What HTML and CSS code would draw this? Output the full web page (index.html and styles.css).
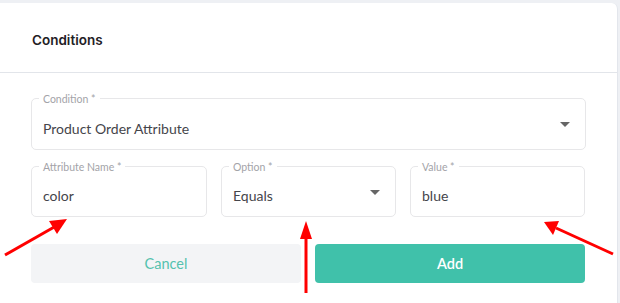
FILE: index.html
```html
<!DOCTYPE html>
<html>
<head>
<meta charset="utf-8">
<link rel="stylesheet" href="styles.css">
</head>
<body>
<div class="card">
  <div class="card-header">Conditions</div>
  <div class="card-body">
    <div class="field field-select field-full">
      <span class="label">Condition *</span>
      <span class="value">Product Order Attribute</span>
      <span class="caret"></span>
    </div>
    <div class="row">
      <div class="field">
        <span class="label">Attribute Name *</span>
        <span class="value">color</span>
      </div>
      <div class="field field-select">
        <span class="label">Option *</span>
        <span class="value">Equals</span>
        <span class="caret"></span>
      </div>
      <div class="field">
        <span class="label">Value *</span>
        <span class="value">blue</span>
      </div>
    </div>
    <div class="actions">
      <button class="btn btn-cancel">Cancel</button>
      <button class="btn btn-add">Add</button>
    </div>
  </div>
</div>
<svg class="arrows" width="620" height="303" viewBox="0 0 620 303">
  <g stroke="#ff0000" stroke-width="3" fill="none" stroke-linecap="butt">
    <line x1="5" y1="255" x2="56" y2="226"/>
    <line x1="306" y1="293" x2="306" y2="235"/>
    <line x1="613" y1="254" x2="556" y2="228"/>
  </g>
  <g fill="#ff0000">
    <polygon points="67,219 49,221 57,234"/>
    <polygon points="306,221 300,239 312,239"/>
    <polygon points="544,222 553,235 559,221"/>
  </g>
</svg>
</body>
</html>
```
FILE: styles.css
```css
html, body {
  margin: 0;
  padding: 0;
}
body {
  width: 620px;
  height: 303px;
  overflow: hidden;
  background: #eef0f4;
  font-family: "Lato", "Noto Sans", sans-serif;
  position: relative;
}
.card {
  margin-top: 3px;
  width: 617px;
  height: 300px;
  background: #fff;
  border-right: 1px solid #e3e6ec;
  border-top-right-radius: 6px;
}
.card-header {
  height: 70px;
  box-sizing: border-box;
  padding: 29px 0 0 32px;
  font-family: "Inter", "Lato", sans-serif;
  font-weight: 600;
  font-size: 13.5px;
  color: #1f2125;
  border-bottom: 1px solid #e2e5ea;
}
.card-body {
  padding: 25px 32px 0 31px;
  display: flex;
  flex-direction: column;
}
.field {
  position: relative;
  box-sizing: border-box;
  height: 52px;
  border: 1px solid #e7e7e9;
  border-radius: 5px;
  display: flex;
  align-items: center;
  padding: 8px 11px 0 11px;
}
.field-full {
  width: 555px;
}
.label {
  position: absolute;
  top: -6px;
  left: 7px;
  padding: 0 4px;
  background: #fff;
  font-size: 10.5px;
  line-height: 12px;
  color: #a3a3a8;
}
.value {
  font-size: 14px;
  color: #45454b;
}
.caret {
  position: absolute;
  right: 15px;
  top: 23px;
  width: 0;
  height: 0;
  border-left: 5px solid transparent;
  border-right: 5px solid transparent;
  border-top: 5px solid #666;
}
.row {
  margin-top: 16px;
  display: grid;
  grid-template-columns: 176px 175px 175px;
  column-gap: 14px;
  width: 554px;
}
.row .field {
  height: 51px;
}
.actions {
  margin-top: 27px;
  display: grid;
  grid-template-columns: 270px 270px;
  column-gap: 14px;
}
.btn {
  height: 39px;
  border: none;
  border-radius: 4px;
  font-family: "Lato", "Noto Sans", sans-serif;
  font-size: 14.5px;
  padding: 0;
}
.btn-cancel {
  background: #f3f4f6;
  color: #55c2ae;
}
.btn-add {
  background: #40c1aa;
  color: #fff;
  font-weight: 600;
}
.arrows {
  position: absolute;
  left: 0;
  top: 0;
}
```
